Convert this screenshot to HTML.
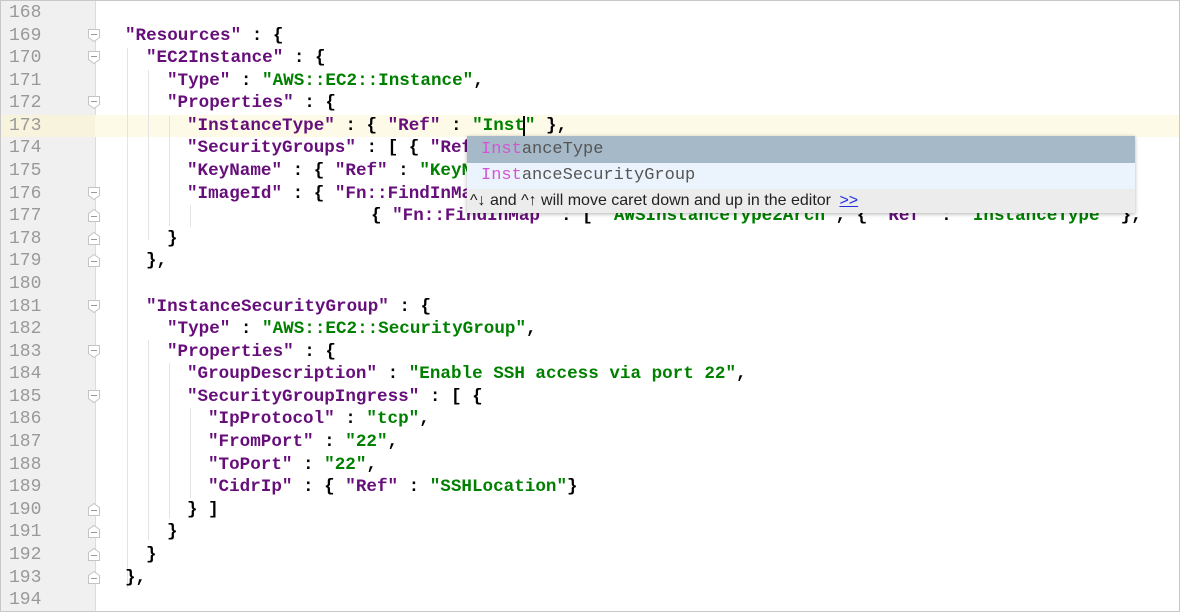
<!DOCTYPE html>
<html><head><meta charset="utf-8"><style>
body{margin:0;width:1180px;height:612px;overflow:hidden;background:#fff;position:relative;font-family:"Liberation Mono",monospace}
.frame{position:absolute;left:0;top:0;width:1178px;height:610px;border:1px solid #c8c8c8}
.gut{position:absolute;left:1px;top:1px;width:94px;height:610px;background:#f0f0f0;border-right:1px solid #dcdcdc}
.hl{position:absolute;left:1px;top:115px;width:1178px;height:22px;background:#fdfae8}
.hl2{position:absolute;left:1px;top:115px;width:94px;height:22px;background:#f7f3dc}
.ln{position:absolute;left:9px;font-size:18px;color:#999;line-height:22px}
.c{position:absolute;font-size:17.6px;font-weight:bold;line-height:22px;white-space:pre;color:#000}
.k{color:#660e7a}.s{color:#008000}
.g{position:absolute;width:1px;background:#e4e4e4}
.f{position:absolute;left:88px;width:12px;height:13px}
.pop{position:absolute;left:467px;top:136px;width:668px;height:77px;background:#ececec;box-shadow:0 1px 4px rgba(0,0,0,.3)}
.r{position:absolute;left:0;width:668px;height:27px;font-family:"Liberation Mono",monospace;font-size:17px;line-height:27px;color:#555;padding-left:14px;box-sizing:border-box}
.m{color:#d455d4}
</style></head><body>
<div class="frame"></div>
<div class="gut"></div>
<div class="hl"></div><div class="hl2"></div>
<div class="g" style="left:127px;top:48px;height:540px"></div>
<div class="g" style="left:148px;top:70px;height:170px"></div>
<div class="g" style="left:148px;top:340px;height:200px"></div>
<div class="g" style="left:169px;top:116px;height:110px"></div>
<div class="g" style="left:169px;top:363px;height:155px"></div>
<div class="g" style="left:190px;top:205px;height:22px"></div>
<div class="g" style="left:190px;top:408px;height:90px"></div>
<div id="L"></div>
<div class="pop">
<div class="r" style="top:0;background:#a5b9c8"><span class="m">Inst</span>anceType</div>
<div class="r" style="top:27px;background:#ebf3fc;height:26px;line-height:26px"><span class="m">Inst</span>anceSecurityGroup</div>
<div style="position:absolute;left:3px;top:54px;font-family:'Liberation Sans',sans-serif;font-size:16px;line-height:22px;color:#222">^↓ and ^↑ will move caret down and up in the editor <span style="color:#2030e0;text-decoration:underline;margin-left:4px">&gt;&gt;</span></div>
</div>
<div style="position:absolute;left:523px;top:116px;width:2px;height:20px;background:#000"></div>
<script>
var K=s=>'<span class="k">'+s+'</span>',S=s=>'<span class="s">'+s+'</span>';
var L=[
[0,''],[125,K('"Resources"')+' : {'],[146,K('"EC2Instance"')+' : {'],[167,K('"Type"')+' : '+S('"AWS::EC2::Instance"')+','],
[167,K('"Properties"')+' : {'],[187,K('"InstanceType"')+' : { '+K('"Ref"')+' : '+S('"Inst"')+' },'],
[187,K('"SecurityGroups"')+' : [ { '+K('"Ref"')+' : '+S('"InstanceSecurityGroup"')+' } ],'],
[187,K('"KeyName"')+' : { '+K('"Ref"')+' : '+S('"KeyName"')+' },'],
[187,K('"ImageId"')+' : { '+K('"Fn::FindInMap"')+' : [ '+S('"AWSRegionArch2AMI"')+', { '+K('"Ref"')+' : '+S('"AWS::Region"')+' },'],
[371,'{ '+K('"Fn::FindInMap"')+' : [ '+S('"AWSInstanceType2Arch"')+', { '+K('"Ref"')+' : '+S('"InstanceType"')+' },'],
[167,'}'],[146,'},'],[0,''],
[146,K('"InstanceSecurityGroup"')+' : {'],[167,K('"Type"')+' : '+S('"AWS::EC2::SecurityGroup"')+','],
[167,K('"Properties"')+' : {'],[187,K('"GroupDescription"')+' : '+S('"Enable SSH access via port 22"')+','],
[187,K('"SecurityGroupIngress"')+' : [ {'],[208,K('"IpProtocol"')+' : '+S('"tcp"')+','],
[208,K('"FromPort"')+' : '+S('"22"')+','],[208,K('"ToPort"')+' : '+S('"22"')+','],
[208,K('"CidrIp"')+' : { '+K('"Ref"')+' : '+S('"SSHLocation"')+'}'],
[187,'} ]'],[167,'}'],[146,'}'],[125,'},'],[0,'']];
var open={1:1,2:1,4:1,8:1,13:1,15:1,17:1};
var close={9:1,10:1,11:1,22:1,23:1,24:1,25:1};
var h='';
for(var i=0;i<L.length;i++){var t=2+22.58*i;
h+='<div class="ln" style="top:'+t+'px">'+(168+i)+'</div>';
if(L[i][0])h+='<div class="c" style="left:'+L[i][0]+'px;top:'+t+'px">'+L[i][1]+'</div>';
if(open[i])h+='<svg class="f" style="top:'+(t+4)+'px" viewBox="0 0 12 13"><path d="M0.5 0.5H11.5V8.5L6 12.5L0.5 8.5Z" fill="#fff" stroke="#c4c4c4"/><path d="M3 5.5H9" stroke="#999"/></svg>';
if(close[i])h+='<svg class="f" style="top:'+(t+4)+'px" viewBox="0 0 12 13"><path d="M0.5 12.5H11.5V4.5L6 0.5L0.5 4.5Z" fill="#fff" stroke="#c4c4c4"/><path d="M3 7.5H9" stroke="#999"/></svg>';}
document.getElementById('L').innerHTML=h;
</script>
</body></html>
